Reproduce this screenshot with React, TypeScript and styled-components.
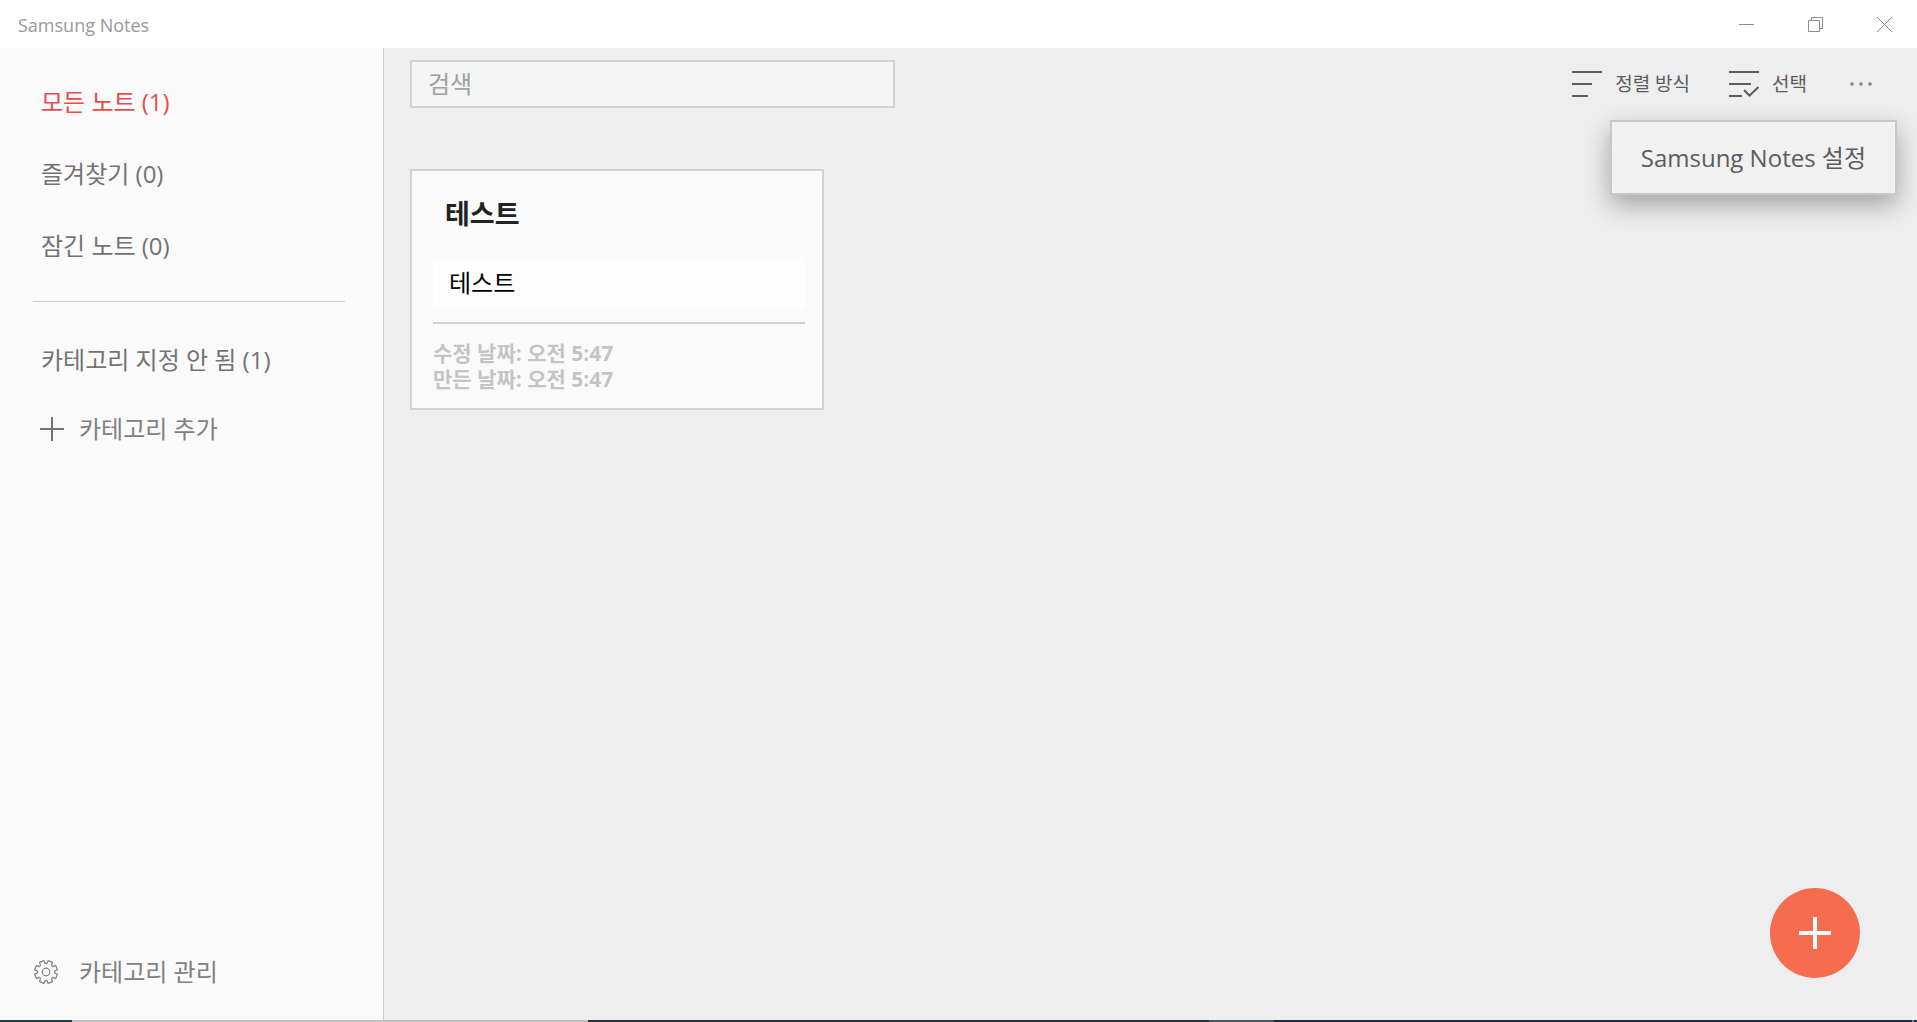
import React from 'react';
import styled, { createGlobalStyle } from 'styled-components';

const fonts = '"Open Sans", "Noto Sans CJK KR", sans-serif';

const GlobalStyle = createGlobalStyle`
  * { box-sizing: border-box; }
  body { margin: 0; background: #eeeeee; font-family: ${fonts}; }
  button, input { font-family: inherit; }
`;

const Window = styled.div`
  min-height: 100vh;
  display: flex;
  flex-direction: column;
`;

const TitleBar = styled.header`
  height: 48px;
  padding-left: 18px;
  display: flex;
  align-items: center;
  justify-content: space-between;
  background: #ffffff;
`;

const AppName = styled.h1`
  margin: 0;
  padding-top: 2px;
  font-size: 18px;
  line-height: 24px;
  font-weight: 400;
  color: #999999;
`;

const WindowControls = styled.div`
  display: flex;
  gap: 3px;
`;

const WindowButton = styled.button`
  width: 66px;
  height: 48px;
  padding: 0;
  border: 0;
  background: transparent;
  color: #8c8c8c;
  display: grid;
  place-items: center;
`;

const Body = styled.div`
  flex: 1;
  display: flex;
`;

const Sidebar = styled.nav`
  width: 384px;
  flex-shrink: 0;
  display: flex;
  flex-direction: column;
  padding: 18px 0 15px;
  background: #fafafa;
  border-right: 1px solid #cccccc;
`;

const NavItem = styled.button<{ $active?: boolean }>`
  height: 72px;
  padding: 0 41px;
  border: 0;
  background: transparent;
  text-align: left;
  font-size: 24px;
  line-height: 32px;
  color: ${(p) => (p.$active ? '#e84c4c' : '#737373')};
`;

const Divider = styled.hr`
  width: 312px;
  margin: 19px 0 22px 33px;
  border: 0;
  border-top: 1px solid #cccccc;
`;

const ActionItem = styled.button`
  height: 66px;
  padding: 0 33px;
  border: 0;
  background: transparent;
  display: grid;
  grid-template-columns: 46px 1fr;
  align-items: center;
  text-align: left;
  font-size: 24px;
  line-height: 32px;
  color: #808080;
`;

const Spacer = styled.div`
  flex: 1;
`;

const Main = styled.main`
  position: relative;
  flex: 1;
  display: flex;
  flex-direction: column;
  background: #eeeeee;
`;

const TopBar = styled.div`
  height: 72px;
  padding: 0 45px 0 26px;
  display: flex;
  align-items: center;
  justify-content: space-between;
`;

const Search = styled.input`
  width: 485px;
  height: 48px;
  padding: 0 16px 2px;
  border: 2px solid #d2d2d2;
  background: #f5f5f5;
  font-size: 24px;
  color: #333333;
  outline: none;
  &::placeholder { color: #a0a0a0; opacity: 1; }
`;

const Toolbar = styled.div`
  display: flex;
  align-items: center;
  gap: 39px;
`;

const ToolButton = styled.button`
  height: 48px;
  padding: 0;
  border: 0;
  background: transparent;
  display: flex;
  align-items: center;
  gap: 13px;
  font-size: 19px;
  line-height: 24px;
  color: #5c5c5c;
`;

const MoreButton = styled(ToolButton)`
  padding-left: 4px;
`;

const Menu = styled.div`
  position: absolute;
  top: 72px;
  right: 20px;
  border: 2px solid #c8c8c8;
  background: #f1f1f1;
  box-shadow: 0 10px 26px rgba(0, 0, 0, 0.32);
`;

const MenuItem = styled.button`
  height: 71px;
  padding: 0 29px;
  border: 0;
  background: transparent;
  font-size: 24px;
  line-height: 32px;
  color: #5c5c5c;
`;

const Notes = styled.section`
  padding: 49px 26px 24px;
  display: flex;
  flex-wrap: wrap;
  gap: 24px;
`;

const Card = styled.article`
  width: 414px;
  padding: 19px 17px 16px 21px;
  border: 2px solid #d2d2d2;
  background: #fafafa;
`;

const CardTitle = styled.h2`
  margin: 0 0 20px;
  padding-left: 12px;
  font-size: 27px;
  line-height: 48px;
  font-weight: 700;
  color: #222222;
`;

const CardBody = styled.p`
  margin: 0 0 13px;
  padding: 0 16px 2px;
  background: #fdfdfd;
  font-size: 24px;
  line-height: 49px;
  color: #000000;
`;

const CardDates = styled.div`
  padding-top: 16px;
  border-top: 2px solid #d2d2d2;
  font-size: 21px;
  line-height: 26px;
  font-weight: 700;
  color: #c4c4c4;
`;

const AddNote = styled.button`
  width: 90px;
  height: 90px;
  margin: auto 57px 42px auto;
  padding: 0;
  border: 0;
  border-radius: 50%;
  background: #f56c4e;
  display: grid;
  place-items: center;
`;

const Edge = styled.footer`
  height: 2px;
  display: grid;
  grid-template-columns: 72fr 516fr 621fr 65fr 638fr 2fr 3fr;
`;

const EdgeSegment = styled.span<{ $color: string }>`
  background: ${(p) => p.$color};
`;

const edgeColors = ['#223a44', '#bfbfbf', '#20353f', '#475663', '#1a2b42', '#7a828c', '#1a2b42'];

const gearPath = (() => {
  const teeth = 8;
  const points: string[] = [];
  for (let i = 0; i < teeth; i += 1) {
    const mid = (i + 0.5) * ((Math.PI * 2) / teeth);
    [[-0.29, 8.6], [-0.2, 11.6], [0.2, 11.6], [0.29, 8.6]].forEach(([a, r]) => {
      points.push(`${(13 + Math.sin(mid + a) * r).toFixed(2)} ${(12 - Math.cos(mid + a) * r).toFixed(2)}`);
    });
  }
  return `M${points.join('L')}Z`;
})();

const MinimizeIcon = () => (
  <svg width="15" height="15" stroke="currentColor"><path d="M0 7.5H15" /></svg>
);
const RestoreIcon = () => (
  <svg width="15" height="15" fill="none" stroke="currentColor">
    <path d="M.5 3.5H11.5V14.5H.5ZM3.5 3.5V.5H14.5V11.5H11.5" />
  </svg>
);
const CloseIcon = () => (
  <svg width="15" height="15" stroke="currentColor"><path d="M0 0L15 15M15 0L0 15" /></svg>
);
const SortIcon = () => (
  <svg width="30" height="26" stroke="currentColor" strokeWidth="2"><path d="M0 1H30M0 13H20M0 25H16" /></svg>
);
const SelectIcon = () => (
  <svg width="30" height="26" fill="none" stroke="currentColor" strokeWidth="2">
    <path d="M0 1H30M0 13H22M0 25H13M15 19L20.5 24.5L29.5 16" />
  </svg>
);
const MoreIcon = () => (
  <svg width="22" height="4" fill="#808080">
    <circle cx="2" cy="2" r="1.8" /><circle cx="11" cy="2" r="1.8" /><circle cx="20" cy="2" r="1.8" />
  </svg>
);
const PlusIcon = () => (
  <svg width="38" height="24" stroke="#737373" strokeWidth="2"><path d="M7 12H31M19 0V24" /></svg>
);
const GearIcon = () => (
  <svg width="26" height="24" fill="none" stroke="currentColor" strokeWidth="1.2" strokeLinejoin="round">
    <path d={gearPath} /><circle cx="13" cy="12" r="3.8" />
  </svg>
);
const AddIcon = () => (
  <svg width="34" height="34" stroke="#ffffff" strokeWidth="4"><path d="M1 17H33M17 1V33" /></svg>
);

export default function App() {
  return (
    <>
      <GlobalStyle />
      <Window>
        <TitleBar>
          <AppName>Samsung Notes</AppName>
          <WindowControls>
            <WindowButton aria-label="최소화"><MinimizeIcon /></WindowButton>
            <WindowButton aria-label="이전 크기로 복원"><RestoreIcon /></WindowButton>
            <WindowButton aria-label="닫기"><CloseIcon /></WindowButton>
          </WindowControls>
        </TitleBar>
        <Body>
          <Sidebar>
            <NavItem $active aria-current="page">모든 노트 (1)</NavItem>
            <NavItem>즐겨찾기 (0)</NavItem>
            <NavItem>잠긴 노트 (0)</NavItem>
            <Divider />
            <NavItem>카테고리 지정 안 됨 (1)</NavItem>
            <ActionItem><PlusIcon />카테고리 추가</ActionItem>
            <Spacer />
            <ActionItem><GearIcon />카테고리 관리</ActionItem>
          </Sidebar>
          <Main>
            <TopBar>
              <Search type="search" placeholder="검색" aria-label="검색" />
              <Toolbar>
                <ToolButton><SortIcon />정렬 방식</ToolButton>
                <ToolButton><SelectIcon />선택</ToolButton>
                <MoreButton aria-label="더 보기" aria-expanded="true"><MoreIcon /></MoreButton>
              </Toolbar>
            </TopBar>
            <Menu role="menu">
              <MenuItem role="menuitem">Samsung Notes 설정</MenuItem>
            </Menu>
            <Notes>
              <Card>
                <CardTitle>테스트</CardTitle>
                <CardBody>테스트</CardBody>
                <CardDates>
                  <div>수정 날짜: 오전 5:47</div>
                  <div>만든 날짜: 오전 5:47</div>
                </CardDates>
              </Card>
            </Notes>
            <AddNote aria-label="새 노트"><AddIcon /></AddNote>
          </Main>
        </Body>
        <Edge>
          {edgeColors.map((color, i) => <EdgeSegment key={i} $color={color} />)}
        </Edge>
      </Window>
    </>
  );
}
